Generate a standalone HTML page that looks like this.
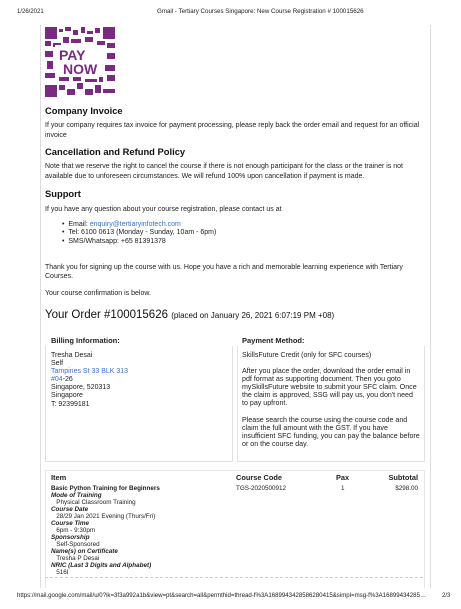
<!DOCTYPE html><html><head><style>
body{margin:0;width:461px;height:609px;background:#fff;font-family:"Liberation Sans",sans-serif;color:#222;position:relative;overflow:hidden}
div,span{position:absolute;white-space:nowrap}
.s{font-size:7px;line-height:8px}
.h{font-size:9.4px;font-weight:bold;color:#111}
.b{font-weight:bold}
.bi{font-weight:bold;font-style:italic}
.l{color:#3a6fd0}
</style></head><body>
<div class="s" style="left:17px;top:8px;font-size:6px">1/26/2021</div>
<div class="s" style="left:157px;top:8px;font-size:6.2px">Gmail - Tertiary Courses Singapore: New Course Registration # 100015626</div>
<div style="left:40px;top:25px;width:389px;height:565px;border-left:1px solid #ddd;border-right:1px solid #ddd"></div>
<svg style="position:absolute;left:45px;top:27px" width="70" height="70" viewBox="0 0 70 70">
<rect width="70" height="70" fill="#fff"/>
<g fill="#7a2a80">
<rect x="0" y="0" width="12" height="12"/><rect x="58" y="0" width="12" height="12"/><rect x="0" y="58" width="12" height="12"/>
<rect x="14" y="2" width="4" height="3"/><rect x="20" y="0" width="6" height="4"/><rect x="28" y="3" width="5" height="5"/><rect x="36" y="0" width="4" height="6"/><rect x="42" y="4" width="6" height="3"/><rect x="50" y="1" width="5" height="5"/>
<rect x="0" y="14" width="6" height="5"/><rect x="8" y="16" width="8" height="4"/><rect x="18" y="10" width="6" height="6"/><rect x="26" y="12" width="10" height="4"/><rect x="40" y="10" width="8" height="5"/><rect x="52" y="14" width="8" height="4"/><rect x="62" y="16" width="8" height="5"/>
<rect x="0" y="24" width="8" height="6"/><rect x="2" y="34" width="6" height="8"/><rect x="0" y="46" width="10" height="5"/><rect x="62" y="26" width="8" height="6"/><rect x="60" y="38" width="10" height="6"/><rect x="62" y="48" width="8" height="6"/>
<rect x="14" y="58" width="6" height="5"/><rect x="22" y="62" width="8" height="6"/><rect x="32" y="56" width="6" height="6"/><rect x="40" y="62" width="8" height="6"/><rect x="50" y="58" width="6" height="8"/><rect x="58" y="62" width="12" height="4"/>
<rect x="14" y="50" width="10" height="4"/><rect x="28" y="50" width="8" height="4"/><rect x="40" y="52" width="12" height="3"/><rect x="54" y="50" width="4" height="5"/>
</g>
<rect x="10" y="18" width="50" height="32" fill="#fff"/>
<text x="14" y="33" font-family="Liberation Sans" font-weight="bold" font-size="14" fill="#7a2a80">PAY</text>
<text x="18" y="47" font-family="Liberation Sans" font-weight="bold" font-size="14" fill="#7a2a80">NOW</text>
</svg>
<div class="h" style="left:45px;top:105px">Company Invoice</div>
<div class="s" style="left:45px;top:122px">If your company requires tax invoice for payment processing, please reply back the order email and request for an official</div>
<div class="s" style="left:45px;top:132px">invoice</div>
<div class="h" style="left:45px;top:146px">Cancellation and Refund Policy</div>
<div class="s" style="left:45px;top:163px">Note that we reserve the right to cancel the course if there is not enough participant for the class or the trainer is not</div>
<div class="s" style="left:45px;top:173px">available due to unforeseen circumstances. We will refund 100% upon cancellation if payment is made.</div>
<div class="h" style="left:45px;top:188px">Support</div>
<div class="s" style="left:45px;top:206px">If you have any question about your course registration, please contact us at</div>
<div class="s" style="left:62px;top:221px">•&nbsp; Email: <span class="l" style="position:static">enquiry@tertiaryinfotech.com</span></div>
<div class="s" style="left:62px;top:229px">•&nbsp; Tel: 6100 0613 (Monday - Sunday, 10am - 6pm)</div>
<div class="s" style="left:62px;top:238px">•&nbsp; SMS/Whatsapp: +65 81391378</div>
<div class="s" style="left:45px;top:264px">Thank you for signing up the course with us. Hope you have a rich and memorable learning experience with Tertiary</div>
<div class="s" style="left:45px;top:273px">Courses.</div>
<div class="s" style="left:45px;top:290px">Your course confirmation is below.</div>
<div style="left:45px;top:309px;font-size:11.5px;color:#111">Your Order #100015626 <span style="position:static;font-size:8px">(placed on January 26, 2021 6:07:19 PM +08)</span></div>
<div class="s b" style="left:51px;top:337px;font-size:7.5px">Billing Information:</div>
<div class="s b" style="left:242px;top:337px;font-size:7.5px">Payment Method:</div>
<div style="left:45px;top:346px;width:186px;height:115px;border:1px solid #e2e2e2;border-top:none"></div>
<div style="left:237px;top:346px;width:186px;height:115px;border:1px solid #e2e2e2;border-top:none"></div>
<div class="s" style="left:51px;top:352px;line-height:8.1px;font-size:7px">Tresha Desai<br>Self<br><span class="l" style="position:static">Tampines St 33 BLK 313</span><br><span class="l" style="position:static">#04</span>-26<br>Singapore, 520313<br>Singapore<br>T: 92399181</div>
<div class="s" style="left:242px;top:352px;font-size:7px">SkillsFuture Credit (only for SFC courses)</div>
<div class="s" style="left:242px;top:367px;line-height:8px;font-size:7.1px">After you place the order, download the order email in<br>pdf format as supporting document. Then you goto<br>mySkillsFuture website to submit your SFC claim. Once<br>the claim is approved, SSG will pay us, you don't need<br>to pay upfront.</div>
<div class="s" style="left:242px;top:416px;line-height:8px;font-size:7.1px">Please search the course using the course code and<br>claim the full amount with the GST. If you have<br>insufficient SFC funding, you can pay the balance before<br>or on the course day.</div>
<div style="left:45px;top:470px;width:378px;height:130px;border:1px solid #e6e6e6"></div>
<div class="b" style="left:51px;top:473px;font-size:7.4px">Item</div>
<div class="b" style="left:236px;top:473px;font-size:7.4px">Course Code</div>
<div class="b" style="left:336px;top:473px;font-size:7.4px">Pax</div>
<div class="b" style="right:43px;top:473px;font-size:7.4px">Subtotal</div>
<div class="s" style="left:51px;top:485px;font-size:6.3px;line-height:7px"><span class="b" style="position:static">Basic Python Training for Beginners</span><br><span class="bi" style="position:static">Mode of Training</span><br>&nbsp;&nbsp;&nbsp;Physical Classroom Training<br><span class="bi" style="position:static">Course Date</span><br>&nbsp;&nbsp;&nbsp;28/29 Jan 2021 Evening (Thurs/Fri)<br><span class="bi" style="position:static">Course Time</span><br>&nbsp;&nbsp;&nbsp;6pm - 9:30pm<br><span class="bi" style="position:static">Sponsorship</span><br>&nbsp;&nbsp;&nbsp;Self-Sponsored<br><span class="bi" style="position:static">Name(s) on Certificate</span><br>&nbsp;&nbsp;&nbsp;Tresha P Desai<br><span class="bi" style="position:static">NRIC (Last 3 Digits and Alphabet)</span><br>&nbsp;&nbsp;&nbsp;516I</div>
<div class="s" style="left:236px;top:485px;font-size:6.3px">TGS-2020500912</div>
<div class="s" style="left:341px;top:485px;font-size:6.3px">1</div>
<div class="s" style="right:43px;top:485px;font-size:6.3px">$298.00</div>
<div style="left:45px;top:577px;width:378px;border-top:1px dashed #ccc"></div>
<div style="left:0;top:588px;width:461px;height:21px;background:#fff"></div>
<div class="s" style="left:17px;top:592px;font-size:6.1px">https://mail.google.com/mail/u/0?ik=3f3a992a1b&amp;view=pt&amp;search=all&amp;permthid=thread-f%3A1689943428586280415&amp;simpl=msg-f%3A16899434285…</div>
<div class="s" style="left:442px;top:592px;font-size:6px">2/3</div>
</body></html>
